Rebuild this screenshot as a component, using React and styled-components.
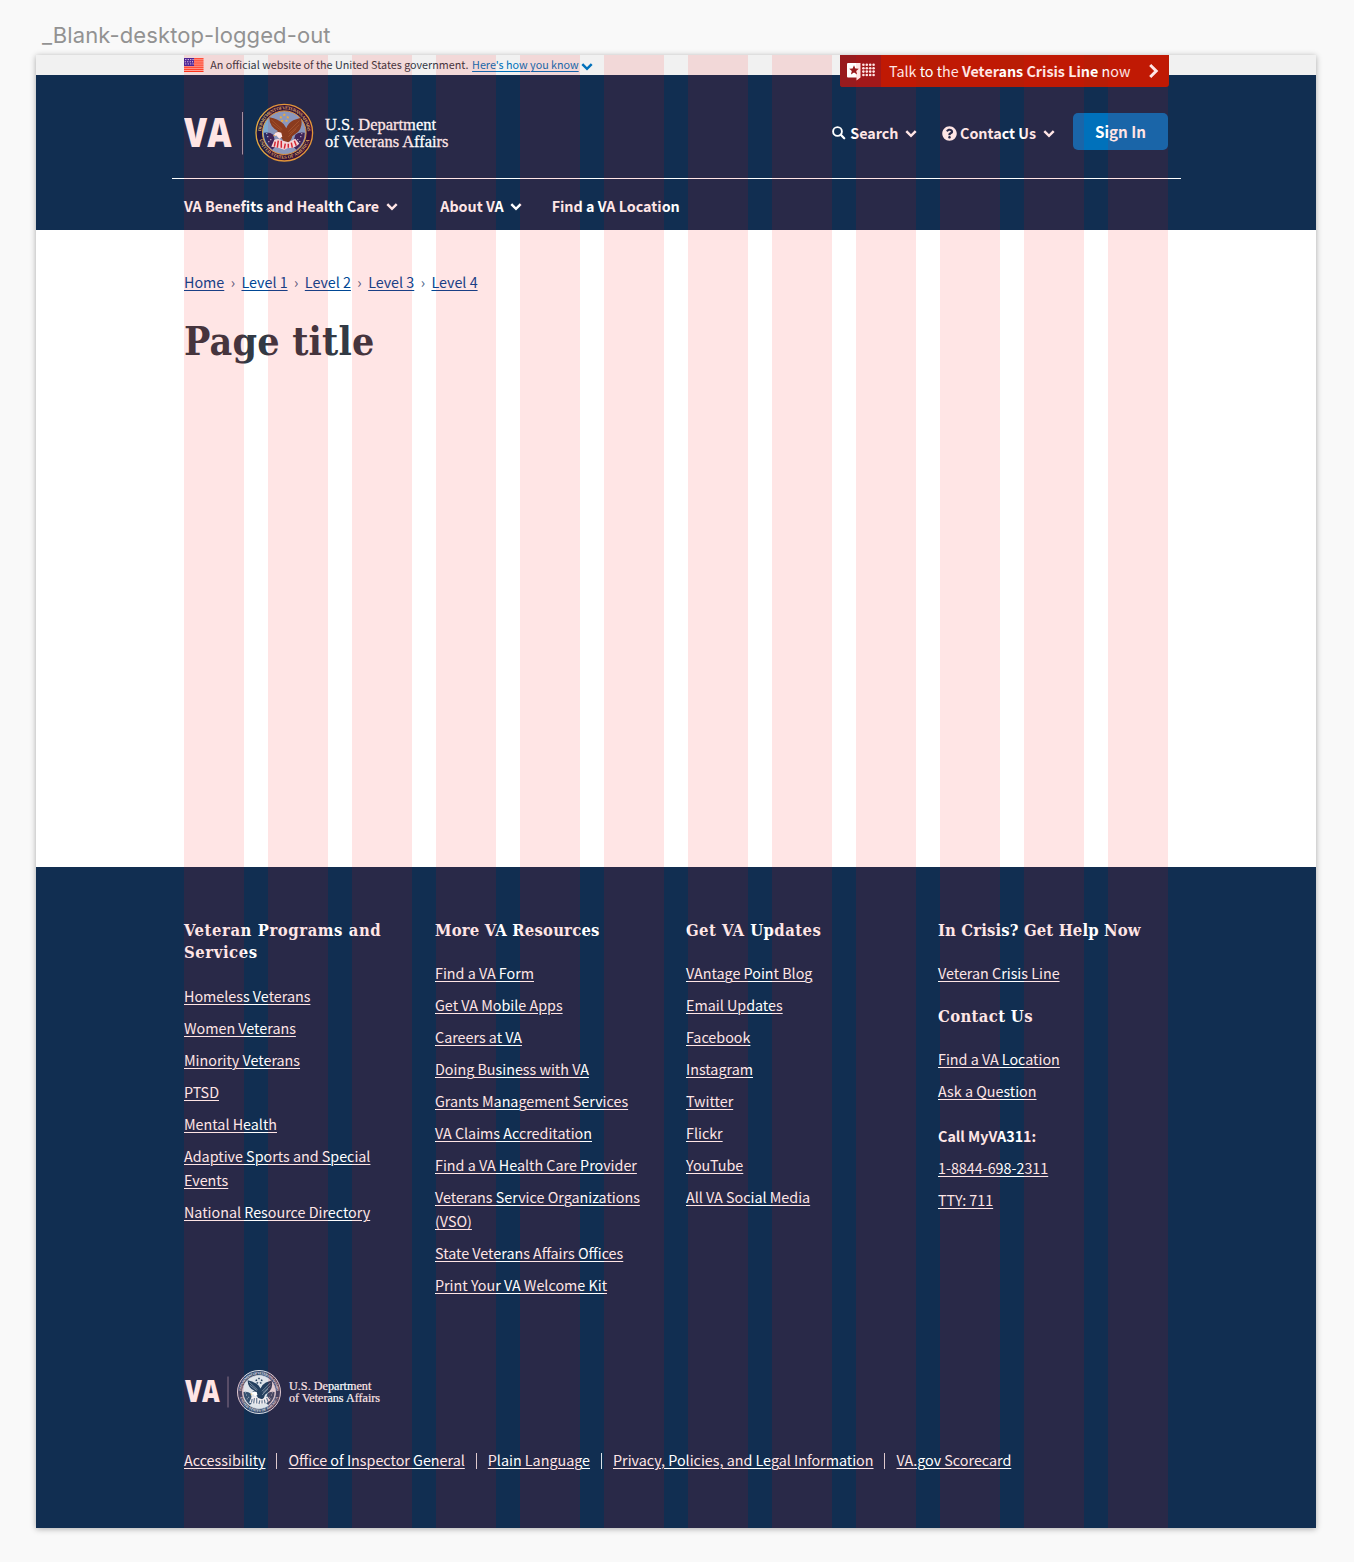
import React from 'react';
import styled, { createGlobalStyle, css } from 'styled-components';
import { FaQuestionCircle } from 'react-icons/fa';

const sans = `"Noto Sans CJK SC", "Noto Sans", sans-serif`;
const slab = `"DejaVu Serif Condensed", "DejaVu Serif", serif`;
const logoSerif = `"Liberation Serif", serif`;
const navy = '#112e51';

const GlobalStyle = createGlobalStyle`
  *, *::before, *::after { box-sizing: border-box; }
  body {
    margin: 0;
    background: #f9f9f9;
    font-family: ${sans};
    font-size: 14.32px;
    line-height: 24px;
    color: #323a45;
  }
`;

const Canvas = styled.div`
  height: 1562px;
  padding: 0 38px 0 36px;
`;

const FrameName = styled.div`
  height: 55px;
  padding: 20px 0 0 6px;
  font: 400 22px/30px Inter, sans-serif;
  letter-spacing: 0.1px;
  color: #929292;
`;

const Frame = styled.div`
  position: relative;
  width: 1280px;
  height: 1473px;
  display: flex;
  flex-direction: column;
  background: #fff;
  box-shadow: 0 1px 6px rgba(0, 0, 0, 0.32);
`;

const GridOverlay = styled.div`
  position: absolute;
  inset: 0;
  padding: 0 148px;
  display: grid;
  grid-template-columns: repeat(12, 60px);
  gap: 24px;
  pointer-events: none;
`;

const GridColumn = styled.div`
  background: rgba(255, 0, 0, 0.1);
`;

const textLink = css`
  text-decoration: underline;
  text-decoration-thickness: 1px;
  text-underline-offset: 2px;
`;

/* Government banner */

const GovBanner = styled.div`
  height: 20px;
  padding: 0 148px;
  display: flex;
  align-items: center;
  background: #f1f1f1;
  font-size: 10.76px;
  line-height: 20px;
  color: #323a45;
`;

const GovText = styled.span`
  margin: 0 3.7px 0 6.3px;
  white-space: nowrap;
`;

const GovLink = styled.a`
  ${textLink}
  color: #0071bb;
  white-space: nowrap;
  margin-right: 2.2px;
`;

const ChevronSvg = styled.svg`
  flex: none;
  width: 12px;
  height: 8px;
  fill: none;
  stroke: ${(p) => p.$color || '#fff'};
  stroke-width: 2.5px;
`;

const Chevron = ({ color }) => (
  <ChevronSvg $color={color} viewBox="0 0 12 8">
    <path d="M1.300 1.200L6 5.800l4.700-4.600" />
  </ChevronSvg>
);

const GovChevron = styled.span`
  display: flex;
  margin-top: 3px;
`;

const CrisisLine = styled.a`
  position: absolute;
  top: 0;
  left: 804.4px;
  width: 328.2px;
  height: 32px;
  display: flex;
  align-items: center;
  overflow: hidden;
  border-radius: 0 0 3px 3px;
  background: #b91c05;
  color: #fff;
  line-height: 32px;
`;

const CrisisIcon = styled.span`
  width: 40.6px;
  height: 32px;
  padding: 8px 0 0 6.6px;
  line-height: 0;
  background: #981b1e;
`;

const CrisisText = styled.span`
  margin-left: 8px;
  flex: 1;
  white-space: nowrap;
  strong { font-weight: 700; }
`;

const CrisisArrow = styled.svg`
  width: 11px;
  height: 16px;
  margin-right: 10px;
  fill: none;
  stroke: #fff;
  stroke-width: 3px;
`;

/* Header */

const Header = styled.header`
  height: 155px;
  padding: 0 135px 0 136px;
  background: ${navy};
  color: #fff;
`;

const HeaderTop = styled.div`
  height: 104px;
  padding: 26px 13px 0 12px;
  display: flex;
  justify-content: space-between;
  border-bottom: 1px solid #fff;
`;

const HeaderTools = styled.div`
  display: flex;
  align-items: flex-start;
  font-weight: 700;
`;

const Tool = styled.a`
  display: flex;
  align-items: center;
  height: 24px;
  margin: 20px ${(p) => p.$after}px 0 0;
  gap: ${(p) => p.$gap}px;
  white-space: nowrap;
  ${ChevronSvg} { margin: 2px 0 0 ${(p) => p.$push}px; }
`;

const SignIn = styled.button`
  width: 95px;
  height: 37px;
  margin-top: 12px;
  padding: 0 0 1px;
  border: 0;
  border-radius: 5px;
  background: #0071bb;
  color: #fff;
  font: 700 15.2px/36px ${sans};
`;

const MainNav = styled.nav`
  display: flex;
  align-items: center;
  height: 24px;
  margin: 15px 12px 0;
  font-weight: 700;
`;

const NavItem = styled.a`
  display: flex;
  align-items: center;
  gap: 6.5px;
  margin-right: ${(p) => p.$after || 0}px;
  white-space: nowrap;
  ${ChevronSvg} { margin-top: 2px; }
`;

/* Content */

const Main = styled.main`
  height: 637px;
  padding: 40px 148px 0;
`;

const Breadcrumbs = styled.nav`
  display: flex;
  color: #5b616b;
`;

const Crumb = styled.a`
  ${textLink}
  color: #004795;
`;

const CrumbSeparator = styled.span`
  width: 17.2px;
  text-align: center;
  color: #4a6285;
`;

const PageTitle = styled.h1`
  margin: 21px 0 0;
  font: 700 39px/52px ${slab};
  letter-spacing: 0.2px;
  color: #323a45;
`;

/* Footer */

const Footer = styled.footer`
  height: 661px;
  padding: 53px 136px 0 148px;
  display: flex;
  flex-direction: column;
  background: ${navy};
  color: #fff;
`;

const FooterColumns = styled.div`
  display: grid;
  grid-template-columns: 227px 227px 228px 227px;
  column-gap: 24px;
  height: 449px;
`;

const FooterTitle = styled.h2`
  margin: 0 0 ${(p) => (p.$wraps ? 20 : 19.4)}px;
  font: 700 16.5px/22px ${slab};
  letter-spacing: ${(p) => p.$track}px;
`;

const LinkList = styled.ul`
  margin: 0 0 20.6px;
  padding: 0;
  display: flex;
  flex-direction: column;
  gap: 8px;
  list-style: none;
`;

const FooterLink = styled.a`
  ${textLink}
  color: #fff;
`;

const CallLabel = styled.li`
  margin-top: 13px;
  font-weight: 700;
`;

const LegalLinks = styled.div`
  display: flex;
  align-items: center;
  margin-top: 33px;
  white-space: nowrap;
`;

const LegalDivider = styled.span`
  width: 1px;
  height: 16px;
  margin: 2px 11.1px 0 10.9px;
  background: rgba(255, 255, 255, 0.85);
`;

/* Drawings */

const FlagIcon = () => (
  <svg width="20" height="14" viewBox="0 0 20 14">
    <rect width="19.500" height="14" fill="#ffd2ca" />
    {[0.2, 2.3, 4.4, 6.5, 8.6, 10.7, 12.8].map((y) => (
      <rect key={y} y={y} width="19.500" height="1.200" fill="#ff3a1e" />
    ))}
    <rect width="10" height="8" fill="#3a2aa8" />
    {[1, 3.2, 5.4].map((y, r) =>
      [1.2, 3.7, 6.2, 8.5].map((x) => (
        <rect key={`${x}-${y}`} x={x + (r % 2 ? -0.5 : 0)} y={y} width="1.100" height="1.100" fill="#e8e4ff" />
      ))
    )}
  </svg>
);

const CrisisChatIcon = () => (
  <svg width="29" height="19" viewBox="0 0 29 19">
    <path d="M1 0h12.5v14.4l-4 3.2v-3H1a1 1 0 0 1-1-1V1a1 1 0 0 1 1-1z" fill="#fff" />
    <path d="M7 2.3l1.400 3.200 3.400.3-2.600 2.200.9 3.400L7 9.600l-3.100 1.800.9-3.400-2.600-2.200 3.400-.3z" fill="#981b1e" />
    {[1.8, 5.2, 8.6, 12].map((y) =>
      [16.4, 19.8, 23.2, 26.6].map((x) => <circle key={`${x}-${y}`} cx={x} cy={y} r="1.300" fill="#fff" />)
    )}
  </svg>
);

const SearchIcon = () => (
  <svg width="14" height="14" viewBox="0 0 14 14" fill="none" stroke="#fff">
    <circle cx="5.500" cy="5.500" r="4.400" strokeWidth="1.900" />
    <path d="M8.800 8.800l3.400 3.400" strokeWidth="2.300" strokeLinecap="round" />
  </svg>
);

const ringTop = 'M-23.300 0a23.300 23.300 0 0 1 46.600 0';
const ringBottom = 'M-26 0a26 26 0 0 0 52 0';

function Seal({ mono, id }) {
  const c = mono
    ? { rim: '#dfe3ea', ring: '#33486a', text: '#e8ebf0', sky: '#dfe4ea', wing: '#24405f', dark: '#34506f', red: '#5f7590', star: '#24405f' }
    : { rim: '#e0a640', ring: '#1f1440', text: '#d9b56a', sky: '#7ea9d2', wing: '#7d4222', dark: '#2b2a63', red: '#d02c3c', star: '#f0c040' };
  return (
    <g>
      <circle r="28.300" fill={c.ring} stroke={c.rim} strokeWidth="1.300" />
      <path id={`${id}-top`} d={ringTop} fill="none" />
      <path id={`${id}-bottom`} d={ringBottom} fill="none" />
      <g fill={c.text} fontFamily="Liberation Serif" fontWeight="700" fontSize="4.600">
        <text>
          <textPath href={`#${id}-top`} startOffset="1.500" textLength="70">DEPARTMENT OF VETERANS AFFAIRS</textPath>
        </text>
        <text>
          <textPath href={`#${id}-bottom`} startOffset="7" textLength="67">UNITED STATES OF AMERICA</textPath>
        </text>
      </g>
      <circle r="21.800" fill={c.sky} stroke={c.rim} strokeWidth="1" />
      <path d="M-20.500 0q6-1 9.500 2l3 11-4 4Q-20.500 10-20.500 0z" fill={c.dark} />
      <path d="M20.500 0q-6-1-9.500 2l-3 11 4 4Q20.500 10 20.500 0z" fill={c.dark} />
      <path d="M-17 4h1M-14 7h1M-16 9h1M16 4h1M13 7h1M15 9h1M17 1h1M-18 1h1" stroke="#fff" strokeWidth="1" />
      <path d="M-10 7Q-5 5-2 8L5 9l6-3 4 5Q9 16.500 4 15L0 17-6 15-13 14z" fill="#f4eef0" />
      <path d="M-9 9l-1 5M-6 8l-1 7M-3 8v7M1 11l-1 5M4 11v4M7 10l1 5M10 8l2 5" stroke={c.red} strokeWidth="1.500" fill="none" />
      <path
        d="M-15-15.500Q-6-14-.5-8.500L2-4.500Q4-10 9-12.500L16.500-15Q19-7 14-1L8 3.500Q7 8 4 9.500L-1 8-3 5-9 1.500Q-9-1-6-1.500-15-6-15-15.500z"
        fill={c.wing}
      />
      <path d="M-13-13L-2-3M-12-9l9 7M15-12L4-1M15-8L5 1M12-4L4 4" stroke={mono ? c.sky : '#a86a3a'} strokeWidth=".6" />
      <path d="M-3 0q-5-2-7 1.500l-.5 2 2.500-.8L-5 6l3-2z" fill="#fff" />
      <path d="M-11 2.200l2 .2-1.500 1.500z" fill="#e8b23c" />
      {[[0, -18], [-3.5, -15.5], [3.5, -15.5], [-2.2, -12], [2.2, -12]].map(([x, y]) => (
        <path key={`${x}${y}`} transform={`translate(${x} ${y})`} d="M0-1.500l.5 1 1.100.1-.8.800.2 1.100-1-.6-1 .6.2-1.100-.8-.8 1.100-.1z" fill={c.star} />
      ))}
    </g>
  );
}

const LogoWord = styled.text`
  font-family: ${logoSerif};
  font-size: ${(p) => p.$size}px;
  fill: #fff;
  stroke: #fff;
  stroke-width: ${(p) => p.$size / 60}px;
`;

const LogoMark = styled.text`
  font: 800 ${(p) => p.$size}px "Open Sans", sans-serif;
  fill: #fff;
`;

const HeaderLogo = () => (
  <svg width="268" height="64" viewBox="184 101 268 64">
    <LogoMark $size={40.6} x="184" y="147" textLength="47.500" lengthAdjust="spacingAndGlyphs">VA</LogoMark>
    <path d="M242.500 112v42.500" stroke="#9a9fb2" />
    <g transform="translate(284.300 132.700)"><Seal id="seal" /></g>
    <LogoWord $size={17} x="325" y="130.300" textLength="111" lengthAdjust="spacingAndGlyphs">U.S. Department</LogoWord>
    <LogoWord $size={17} x="325" y="147" textLength="123.500" lengthAdjust="spacingAndGlyphs">of Veterans Affairs</LogoWord>
  </svg>
);

const FooterLogo = () => (
  <svg width="200" height="46" viewBox="184 1369 200 46">
    <LogoMark $size={29.6} x="185" y="1402" textLength="34.700" lengthAdjust="spacingAndGlyphs">VA</LogoMark>
    <path d="M228 1376.500v31" stroke="#7d7f97" />
    <g transform="translate(259 1392) scale(.76)"><Seal id="seal-mono" mono /></g>
    <LogoWord $size={12.2} x="289" y="1389.700" textLength="82.300" lengthAdjust="spacingAndGlyphs">U.S. Department</LogoWord>
    <LogoWord $size={12.2} x="289" y="1401.900" textLength="91" lengthAdjust="spacingAndGlyphs">of Veterans Affairs</LogoWord>
  </svg>
);

const programs = ['Homeless Veterans', 'Women Veterans', 'Minority Veterans', 'PTSD', 'Mental Health', 'Adaptive Sports and Special Events', 'National Resource Directory'];
const resources = ['Find a VA Form', 'Get VA Mobile Apps', 'Careers at VA', 'Doing Business with VA', 'Grants Management Services', 'VA Claims Accreditation', 'Find a VA Health Care Provider', 'Veterans Service Organizations (VSO)', 'State Veterans Affairs Offices', 'Print Your VA Welcome Kit'];
const updates = ['VAntage Point Blog', 'Email Updates', 'Facebook', 'Instagram', 'Twitter', 'Flickr', 'YouTube', 'All VA Social Media'];
const legal = ['Accessibility', 'Office of Inspector General', 'Plain Language', 'Privacy, Policies, and Legal Information', 'VA.gov Scorecard'];

const Links = ({ items, children }) => (
  <LinkList>
    {items.map((t) => <li key={t}><FooterLink>{t}</FooterLink></li>)}
    {children}
  </LinkList>
);

export default function App() {
  return (
    <Canvas>
      <GlobalStyle />
      <FrameName>_Blank-desktop-logged-out</FrameName>
      <Frame>
        <GovBanner>
          <FlagIcon />
          <GovText>An official website of the United States government.</GovText>
          <GovLink>Here's how you know</GovLink>
          <GovChevron><Chevron color="#0071bb" /></GovChevron>
        </GovBanner>
        <Header>
          <HeaderTop>
            <HeaderLogo />
            <HeaderTools>
              <Tool $after={25} $gap={4} $push={2.5}>
                <SearchIcon />
                Search
                <Chevron />
              </Tool>
              <Tool $after={18.3} $gap={3} $push={3.7}>
                <FaQuestionCircle size={15} />
                Contact Us
                <Chevron />
              </Tool>
              <SignIn>Sign In</SignIn>
            </HeaderTools>
          </HeaderTop>
          <MainNav>
            <NavItem $after={42.7}>VA Benefits and Health Care<Chevron /></NavItem>
            <NavItem $after={29.4}>About VA<Chevron /></NavItem>
            <NavItem>Find a VA Location</NavItem>
          </MainNav>
        </Header>
        <CrisisLine>
          <CrisisIcon><CrisisChatIcon /></CrisisIcon>
          <CrisisText>Talk to the <strong>Veterans Crisis Line</strong> now</CrisisText>
          <CrisisArrow viewBox="0 0 11 16"><path d="M2.200 2L8.200 8l-6 6" /></CrisisArrow>
        </CrisisLine>
        <Main>
          <Breadcrumbs>
            {['Home', 'Level 1', 'Level 2', 'Level 3', 'Level 4'].map((t, i) => (
              <React.Fragment key={t}>
                {i > 0 && <CrumbSeparator>›</CrumbSeparator>}
                <Crumb>{t}</Crumb>
              </React.Fragment>
            ))}
          </Breadcrumbs>
          <PageTitle>Page title</PageTitle>
        </Main>
        <Footer>
          <FooterColumns>
            <section>
              <FooterTitle $track={0.57} $wraps>Veteran Programs and Services</FooterTitle>
              <Links items={programs} />
            </section>
            <section>
              <FooterTitle $track={0.2}>More VA Resources</FooterTitle>
              <Links items={resources} />
            </section>
            <section>
              <FooterTitle $track={0.44}>Get VA Updates</FooterTitle>
              <Links items={updates} />
            </section>
            <section>
              <FooterTitle $track={0.14}>In Crisis? Get Help Now</FooterTitle>
              <Links items={['Veteran Crisis Line']} />
              <FooterTitle $track={0.35}>Contact Us</FooterTitle>
              <Links items={['Find a VA Location', 'Ask a Question']}>
                <CallLabel>Call MyVA311:</CallLabel>
                <li><FooterLink>1-8844-698-2311</FooterLink></li>
                <li><FooterLink>TTY: 711</FooterLink></li>
              </Links>
            </section>
          </FooterColumns>
          <FooterLogo />
          <LegalLinks>
            {legal.map((t, i) => (
              <React.Fragment key={t}>
                {i > 0 && <LegalDivider />}
                <FooterLink>{t}</FooterLink>
              </React.Fragment>
            ))}
          </LegalLinks>
        </Footer>
        <GridOverlay>
          {Array.from({ length: 12 }, (_, i) => <GridColumn key={i} />)}
        </GridOverlay>
      </Frame>
    </Canvas>
  );
}
